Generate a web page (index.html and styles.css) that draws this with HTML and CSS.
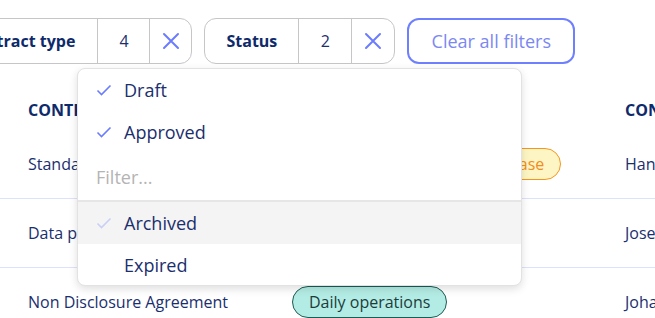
FILE: index.html
```html
<!DOCTYPE html>
<html>
<head>
<meta charset="utf-8">
<link rel="stylesheet" href="styles.css">
</head>
<body>
<div class="page">
  <div class="toolbar">
    <div class="filter first">
      <span class="f-label">Contract type</span>
      <span class="f-count">4</span>
      <button class="f-clear" aria-label="Remove"><svg width="18" height="18" viewBox="0 0 18 18"><path d="M2 2L16 16M16 2L2 16" stroke="#6b7cff" stroke-width="2" fill="none" stroke-linecap="round"/></svg></button>
    </div>
    <div class="filter">
      <span class="f-label">Status</span>
      <span class="f-count">2</span>
      <button class="f-clear" aria-label="Remove"><svg width="18" height="18" viewBox="0 0 18 18"><path d="M2 2L16 16M16 2L2 16" stroke="#6b7cff" stroke-width="2" fill="none" stroke-linecap="round"/></svg></button>
    </div>
    <button class="clear-all">Clear all filters</button>
  </div>

  <div class="table">
    <div class="row head">
      <div class="c1">CONTRACT NAME</div>
      <div class="c2">CATEGORY</div>
      <div class="c3">CONTACT PERSON</div>
    </div>
    <div class="row">
      <div class="c1">Standard service agreement</div>
      <div class="c2"><span class="tag teal">Daily operations</span><span class="tag yellow">Purchase</span></div>
      <div class="c3">Hanna Lindqvist</div>
    </div>
    <div class="row">
      <div class="c1">Data processing agreement</div>
      <div class="c2"><span class="tag teal">Daily operations</span></div>
      <div class="c3">Josefin Berg</div>
    </div>
    <div class="row">
      <div class="c1">Non Disclosure Agreement</div>
      <div class="c2"><span class="tag teal">Daily operations</span></div>
      <div class="c3">Johan Nilsson</div>
    </div>
  </div>

  <div class="dropdown">
    <div class="opt"><span class="chk"><svg width="16" height="12" viewBox="0 0 16 12"><path d="M1.5 6.5L5.5 10.5L14.5 1.5" stroke="#6b7cff" stroke-width="1.6" fill="none"/></svg></span>Draft</div>
    <div class="opt"><span class="chk"><svg width="16" height="12" viewBox="0 0 16 12"><path d="M1.5 6.5L5.5 10.5L14.5 1.5" stroke="#6b7cff" stroke-width="1.6" fill="none"/></svg></span>Approved</div>
    <div class="search">Filter...</div>
    <div class="opt hover"><span class="chk"><svg width="16" height="12" viewBox="0 0 16 12"><path d="M1.5 6.5L5.5 10.5L14.5 1.5" stroke="#c9cff6" stroke-width="1.6" fill="none"/></svg></span>Archived</div>
    <div class="opt"><span class="chk"></span>Expired</div>
  </div>
</div>
</body>
</html>
```

FILE: styles.css
```css
* { box-sizing: border-box; }
html, body { margin: 0; padding: 0; background: #fff; }
body {
  font-family: "Open Sans", "Noto Sans", sans-serif;
  color: #1b2f6e;
  width: 655px;
  height: 318px;
  overflow: hidden;
}
.page { position: relative; width: 655px; height: 318px; overflow: hidden; }

.toolbar {
  display: flex;
  gap: 12px;
  padding-top: 18px;
  margin-left: -59px;
}
.filter {
  display: flex;
  height: 46px;
  border: 1px solid #c6c6c6;
  border-radius: 12px;
  flex: none;
}
.f-label {
  display: flex;
  align-items: center;
  padding: 0 21px;
  font-weight: 700;
  font-size: 16px;
  color: #0e2a6b;
  border-right: 1px solid #c6c6c6;
}
.filter.first .f-label { padding-left: 24px; padding-right: 22px; }
.f-count {
  display: flex;
  align-items: center;
  justify-content: center;
  width: 53px;
  font-size: 16px;
  color: #1b2f6e;
  border-right: 1px solid #c6c6c6;
}
.filter.first .f-count { width: 52px; }
.f-clear {
  display: flex;
  align-items: center;
  justify-content: center;
  width: 42px;
  border: 0;
  background: none;
  padding: 0;
}
.filter.first .f-clear { width: 41px; }
.clear-all {
  height: 46px;
  width: 168px;
  border: 2px solid #6f80ff;
  border-radius: 12px;
  background: #fff;
  color: #7b88f2;
  font-family: "Open Sans", sans-serif;
  font-size: 18px;
  padding: 0;
}

.table { width: 900px; }
.row {
  display: grid;
  grid-template-columns: 264px 333px 1fr;
  padding-left: 28px;
  height: 69px;
  align-items: center;
  font-size: 16px;
  border-bottom: 1px solid #dde1fb;
}
.row.head {
  height: 66px;
  border-bottom: 0;
  font-weight: 700;
  font-size: 16px;
  color: #0e2a6b;
  padding-top: 26px;
}
.row > div { white-space: nowrap; }
.c2 { display: flex; gap: 11px; }
.tag {
  display: inline-flex;
  align-items: center;
  height: 32px;
  padding: 0 16px;
  border-radius: 16px;
  border: 1px solid;
  font-size: 16px;
}
.tag.teal { background: #b3ece4; border-color: #1d5c55; color: #1d3d3c; }
.tag.yellow { background: #fdf6c4; border-color: #f7961e; color: #f18c22; }

.dropdown {
  position: absolute;
  left: 77px;
  top: 68px;
  width: 445px;
  height: 218px;
  background: #fff;
  border: 1px solid #e2e2e2;
  border-radius: 8px;
  box-shadow: 0 3px 8px rgba(0,0,0,0.13);
  overflow: hidden;
  display: flex;
  flex-direction: column;
}
.opt {
  display: flex;
  align-items: center;
  height: 42px;
  padding-left: 18px;
  font-size: 18px;
  color: #1b2f6e;
  flex: none;
}
.chk { width: 28px; display: flex; align-items: center; }
.opt.hover { background: #f4f4f4; }
.search {
  height: 49px;
  display: flex;
  align-items: center;
  padding-left: 18px;
  font-size: 18px;
  color: #b4b4b4;
  border-bottom: 2px solid #e6e6e6;
  flex: none;
}
```
